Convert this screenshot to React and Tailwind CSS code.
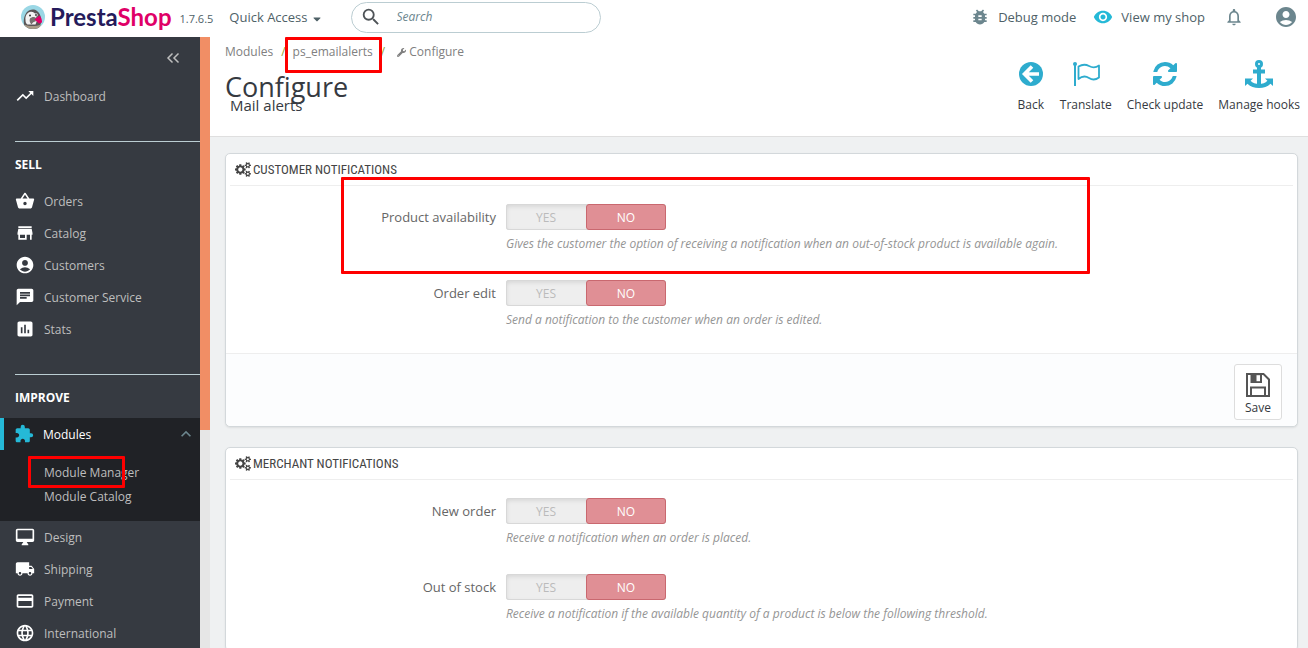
import { useState } from "react";
import {
  MdTrendingUp, MdShoppingBasket, MdStore, MdAccountCircle, MdChat, MdAssessment,
  MdExtension, MdLocalShipping, MdPayment, MdLanguage, MdSearch,
  MdBugReport, MdRemoveRedEye, MdNotificationsNone, MdKeyboardArrowUp,
} from "react-icons/md";
import { FaWrench, FaCaretDown } from "react-icons/fa";

function Logo() {
  return (
    <a href="#home" className="flex items-center gap-[5px]" aria-label="PrestaShop">
      <svg viewBox="0 0 48 48" className="size-6 shrink-0" aria-hidden="true">
        <defs>
          <clipPath id="disc"><circle cx="24" cy="24" r="24" /></clipPath>
        </defs>
        <g clipPath="url(#disc)">
          <rect width="48" height="48" fill="#9ad7e5" />
          <path d="M7 42C4 32 6 22 11 15c5-6 15-8 21-3 7 5 9 14 8 24l-4 12H10Z" fill="#5a5657" />
          <path d="M9 30c-1-8 3-15 9-16 5-1 9 1 11 5l3 12-3 8H13c-3-2-4-5-4-9Z" fill="#f2f2f2" />
          <circle cx="18" cy="21" r="2" fill="#333" />
          <circle cx="30" cy="20" r="3.500" fill="#f2f2f2" />
          <circle cx="30" cy="20" r="1.800" fill="#333" />
          <path d="M18 27c4-4 10-4 13 0l-2 6c-3 0-6 2-8 6-3-3-5-8-3-12Z" fill="#77706f" />
          <path d="m27 29 10-8c4 4 5 9 5 14l-6 2Z" fill="#df0067" />
          <path d="M7 39c9 4 22 4 33 0l-3 10H11Z" fill="#a89a87" />
        </g>
      </svg>
      <span className="font-['Lato',sans-serif] text-[24px] leading-6 font-bold text-[#251b5b]">
        Presta<span className="text-[#df0067]">Shop</span>
      </span>
    </a>
  );
}

function Cogs() {
  return (
    <svg viewBox="0 0 1920 1792" className="h-[15px] w-4 shrink-0 fill-current" aria-hidden="true">
      <path d="M896 896q0-106-75-181t-181-75-181 75-75 181 75 181 181 75 181-75 75-181zm768 512q0-52-38-90t-90-38-90 38-38 90q0 53 37.500 90.500t90.500 37.500 90.500-37.500 37.500-90.500zm0-1024q0-52-38-90t-90-38-90 38-38 90q0 53 37.500 90.500t90.500 37.500 90.500-37.500 37.500-90.500zm-384 421v185q0 10-7 19.500t-16 10.500l-155 24q-11 35-32 76 34 48 90 115 7 11 7 20 0 12-7 19-23 30-82.500 89.500t-78.500 59.500q-11 0-21-7l-115-90q-37 19-77 31-11 108-23 155-7 24-30 24h-186q-11 0-20-7.500t-10-17.500l-23-153q-34-10-75-31l-118 89q-7 7-20 7-11 0-21-8-144-133-144-160 0-9 7-19 10-14 41-53t47-61q-23-44-35-82l-152-24q-10-1-17-9.500t-7-19.500v-185q0-10 7-19.500t16-10.500l155-24q11-35 32-76-34-48-90-115-7-11-7-20 0-12 7-20 22-30 82-89t79-59q11 0 21 7l115 90q34-18 77-32 11-108 23-154 7-24 30-24h186q11 0 20 7.500t10 17.500l23 153q34 10 75 31l118-89q8-7 20-7 11 0 21 8 144 133 144 160 0 8-7 19-12 16-42 54t-45 60q23 48 34 82l152 23q10 2 17 10.500t7 19.500zm640 533v140q0 16-149 31-12 27-30 52 51 113 51 138 0 4-4 7-122 71-124 71-8 0-46-47t-52-68q-20 2-30 2t-30-2q-14 21-52 68t-46 47q-2 0-124-71-4-3-4-7 0-25 51-138-18-25-30-52-149-15-149-31v-140q0-16 149-31 13-29 30-52-51-113-51-138 0-4 4-7 4-2 35-20t59-34 30-16q8 0 46 46.500t52 67.500q20-2 30-2t30 2q51-71 92-112l6-2q4 0 124 70 4 3 4 7 0 25-51 138 17 23 30 52 149 15 149 31zm0-1024v140q0 16-149 31-12 27-30 52 51 113 51 138 0 4-4 7-122 71-124 71-8 0-46-47t-52-68q-20 2-30 2t-30-2q-14 21-52 68t-46 47q-2 0-124-71-4-3-4-7 0-25 51-138-18-25-30-52-149-15-149-31v-140q0-16 149-31 13-29 30-52-51-113-51-138 0-4 4-7 4-2 35-20t59-34 30-16q8 0 46 46.500t52 67.500q20-2 30-2t30 2q51-71 92-112l6-2q4 0 124 70 4 3 4 7 0 25-51 138 17 23 30 52 149 15 149 31z" />
    </svg>
  );
}

function Monitor(props) {
  return (
    <svg viewBox="0 0 24 24" fill="currentColor" {...props}>
      <path d="M21 2H3c-1.100 0-2 .9-2 2v12c0 1.100.9 2 2 2h7l-2 3v1h8v-1l-2-3h7c1.100 0 2-.9 2-2V4c0-1.100-.9-2-2-2zm0 12H3V4h18v10z" />
    </svg>
  );
}

const toolbar = [
  {
    label: "Back",
    icon: (
      <svg viewBox="0 0 28 28" className="size-7" aria-hidden="true">
        <circle cx="14" cy="14" r="12" fill="currentColor" />
        <path d="M15 6.500 7.500 14l7.500 7.500M8.500 14H22" fill="none" stroke="#fff" strokeWidth="3.600" />
      </svg>
    ),
  },
  {
    label: "Translate",
    icon: (
      <svg viewBox="0 0 28 28" className="size-7" aria-hidden="true">
        <circle cx="3" cy="4" r="2" fill="currentColor" />
        <path d="M3 4v22" fill="none" stroke="currentColor" strokeWidth="2" />
        <path d="M6.500 6.500c4-2.400 7-2.400 10.500-.5s6.500 2 10-.5v12c-3.500 2.600-6.500 2.800-10 .5s-6.500-2.400-10.500 1Z" fill="none" stroke="currentColor" strokeWidth="1.800" strokeLinejoin="round" />
      </svg>
    ),
  },
  {
    label: "Check update",
    icon: (
      <svg viewBox="0 0 1536 1536" className="size-6 fill-current" aria-hidden="true">
        <path d="M1511 928q0 5-1 7-64 268-268 434.500T764 1536q-146 0-282.500-55T238 1324l-129 129q-19 19-45 19t-45-19-19-45V960q0-26 19-45t45-19h448q26 0 45 19t19 45-19 45l-137 137q71 66 161 102t187 36q134 0 250-65t186-179q11-17 53-117 8-23 30-23h192q13 0 22.500 9.500t9.500 22.500zm25-800v448q0 26-19 45t-45 19h-448q-26 0-45-19t-19-45 19-45l138-138Q969 256 768 256q-134 0-250 65T332 500q-11 17-53 117-8 23-30 23H50q-13 0-22.500-9.500T18 608v-7q65-268 270-434.500T768 0q146 0 284 55.500T1297 212l130-129q19-19 45-19t45 19 19 45z" />
      </svg>
    ),
  },
  {
    label: "Manage hooks",
    icon: (
      <svg viewBox="0 0 28 28" className="size-7" aria-hidden="true">
        <circle cx="14" cy="4" r="2.500" fill="none" stroke="currentColor" strokeWidth="3" />
        <path d="M14 6v19M8 11.500h12" fill="none" stroke="currentColor" strokeWidth="4" />
        <path d="M0 18.500h8l-2.400 2.300c2 2.300 5 3.200 8.400 3.200s6.400-.9 8.400-3.200L20 18.500h8V26l-2.500-2.300C22.500 26.700 18.700 28 14 28S5.500 26.700 2.500 23.700L0 26Z" fill="currentColor" />
      </svg>
    ),
  },
];

const sell = [
  ["Orders", MdShoppingBasket],
  ["Catalog", MdStore],
  ["Customers", MdAccountCircle],
  ["Customer Service", MdChat],
  ["Stats", MdAssessment],
];
const improve = [
  ["Design", Monitor],
  ["Shipping", MdLocalShipping],
  ["Payment", MdPayment],
  ["International", MdLanguage],
];

function NavItem({ label, Icon }) {
  return (
    <a href="#nav" className="flex h-8 items-center gap-[9px] pl-[15px] text-xs text-[#bebebe]">
      <Icon className="size-5 text-white" aria-hidden="true" />
      <span className="pt-px">{label}</span>
    </a>
  );
}

function NavTitle({ children }) {
  return (
    <h2 className="ml-[15px] border-t border-[#bbcdd2] pt-[13px] text-xs leading-5 font-bold text-white">{children}</h2>
  );
}

function Sidebar() {
  return (
    <div className="flex shrink-0 bg-[#e6e6e6]">
      <nav className="w-[200px] overflow-hidden bg-[#363a41]">
        <div className="flex h-[43px] items-center justify-end pr-5">
          <button type="button" aria-label="Collapse menu" className="text-[#bebebe]">
            <svg viewBox="0 0 14 12" className="mb-[2px] h-3 w-[14px]" fill="none" stroke="currentColor" strokeWidth="1.500" aria-hidden="true">
              <path d="M6.500 1.500 2 6l4.500 4.500M12.500 1.500 8 6l4.500 4.500" />
            </svg>
          </button>
        </div>
        <div className="pb-[29px]">
          <NavItem label="Dashboard" Icon={MdTrendingUp} />
        </div>
        <NavTitle>SELL</NavTitle>
        <div className="pt-[10px] pb-[29px]">
          {sell.map(([label, Icon]) => <NavItem key={label} label={label} Icon={Icon} />)}
        </div>
        <NavTitle>IMPROVE</NavTitle>
        <div className="mt-[10px] h-[103px] bg-[#202226] text-xs">
          <a href="#modules" className="flex h-8 items-center border-l-4 border-[#25b9d7] pr-1 pl-[10px] text-white">
            <MdExtension className="size-5 text-[#25b9d7]" aria-hidden="true" />
            <span className="grow pt-px pl-[9px]">Modules</span>
            <MdKeyboardArrowUp className="size-5 text-[#6c868e]" aria-hidden="true" />
          </a>
          <div className="relative flex flex-col pt-[11px] pl-11 leading-6 text-[#bebebe]">
            <a href="#manager">Module Manager</a>
            <a href="#catalog">Module Catalog</a>
            <div className="absolute top-[6px] left-7 h-8 w-[97px] rounded-[1px] border-3 border-[#fe0000]" />
          </div>
        </div>
        {improve.map(([label, Icon]) => <NavItem key={label} label={label} Icon={Icon} />)}
      </nav>
      <div className="h-[393px] w-[10px] bg-[#f18e65]" />
    </div>
  );
}

function TopBar() {
  return (
    <header className="flex h-[37px] shrink-0 items-center bg-white pb-[3px] pl-[21px] text-[13px] text-[#4e6167]">
      <Logo />
      <span className="pt-1 pl-2 text-[11px]">1.7.6.5</span>
      <button type="button" className="ml-4 flex items-center gap-[3px] pt-px text-[13px]">
        Quick Access <FaCaretDown className="mt-[3px] size-3" aria-hidden="true" />
      </button>
      <label className="ml-7 flex h-[31px] w-[250px] items-center rounded-full border border-[#bbcdd2] pl-2">
        <MdSearch className="size-[22px] text-[#4e5357]" aria-hidden="true" />
        <input aria-label="Search" placeholder="Search" className="ml-[15px] w-40 text-xs italic outline-none placeholder:text-[#6c868e]" />
      </label>
      <div className="ml-auto flex items-center pr-[10px]">
        <MdBugReport className="size-5 text-[#6c868e]" aria-hidden="true" />
        <span className="pt-px pl-2">Debug mode</span>
        <a href="#shop" className="ml-[17px] flex items-center gap-2">
          <MdRemoveRedEye className="size-5 text-[#25b9d7]" aria-hidden="true" />
          <span className="pt-px">View my shop</span>
        </a>
        <button type="button" aria-label="Notifications" className="ml-[19px]">
          <MdNotificationsNone className="size-5 text-[#6c868e]" aria-hidden="true" />
        </button>
        <button type="button" aria-label="Account" className="ml-[30px]">
          <MdAccountCircle className="size-6 text-[#6c868e]" aria-hidden="true" />
        </button>
      </div>
    </header>
  );
}

function PageHead() {
  return (
    <div className="flex h-[100px] justify-between border-b border-[#dfdfdf] bg-white pr-2 pl-[15px]">
      <div>
        <div className="flex h-[29px] items-center text-xs text-[#808080]">
          <a href="#modules">Modules</a>
          <span className="pl-2 text-[#90a030]">/</span>
          <span className="relative ml-[7px]">
            <a href="#module">ps_emailalerts</a>
            <span className="absolute -top-[7px] -left-2 h-9 w-[97px] rounded-[1px] border-3 border-[#fe0000]" />
          </span>
          <span className="pl-2 text-[#90a030]">/</span>
          <FaWrench className="mt-px mr-[3px] ml-3 size-[9px]" aria-hidden="true" />
          Configure
        </div>
        <h1 className="text-[27px] leading-[42px] text-[#363a41]">Configure</h1>
        <h4 className="-mt-[13px] pl-[5px] text-[15px] leading-5 text-[#363a41]">Mail alerts</h4>
      </div>
      <div className="flex gap-[15px] pt-[23px] text-xs text-[#363a41]">
        {toolbar.map(({ label, icon }) => (
          <a key={label} href="#action" className="flex flex-col items-center">
            <span className="flex h-7 items-center text-[#2eacce]">{icon}</span>
            <span className="pt-2 leading-[18px]">{label}</span>
          </a>
        ))}
      </div>
    </div>
  );
}

function YesNo({ id, label, help, marked }) {
  const [on, setOn] = useState(false);
  const half = "flex w-20 cursor-pointer items-center justify-center rounded-[3px] pt-px";
  const off = half + " text-[#bbbbbb]";
  return (
    <div className="relative grid h-[76px] grid-cols-[270px_1fr] gap-[10px] text-[13px]">
      <div id={id} className="pt-[3px] text-right leading-5 text-[#666666]">{label}</div>
      <div>
        <div role="radiogroup" aria-labelledby={id} className="flex h-[26px] w-40 rounded-[3px] bg-[#eeeeee] text-xs shadow-[inset_0_0_0_1px_#d8d8d8,inset_0_2px_5px_rgba(0,0,0,0.12)]">
          <label className={on ? half + " border border-[#5fae68] bg-[#92d097] text-white" : off}>
            <input type="radio" name={id} className="sr-only" checked={on} onChange={() => setOn(true)} />YES
          </label>
          <label className={on ? off : half + " border border-[#c9686f] bg-[#e08f95] text-white"}>
            <input type="radio" name={id} className="sr-only" checked={!on} onChange={() => setOn(false)} />NO
          </label>
        </div>
        <p className="pt-[5px] text-xs leading-[18px] text-[#959595] italic">{help}</p>
      </div>
      {marked && <div className="absolute -top-[27px] left-[115px] h-[97px] w-[749px] rounded-[1px] border-3 border-[#fe0000]" />}
    </div>
  );
}

function Panel({ title, children, footer }) {
  return (
    <section className="rounded-[5px] border border-[#d3d8db] bg-white shadow-[0_1px_2px_rgba(0,0,0,0.08)]">
      <h3 className="mx-1 flex h-8 items-center gap-[2px] border-b border-[#eeeeee] pl-[5px] font-['Ubuntu_Condensed','Roboto_Condensed','Liberation_Sans_Narrow',sans-serif] text-[13px] text-[#444444]">
        <Cogs /> {title}
      </h3>
      <div className="pt-[18px]">{children}</div>
      {footer}
    </section>
  );
}

export default function App() {
  return (
    <div className="flex h-screen flex-col overflow-hidden bg-[#eff1f2] font-['Open_Sans',sans-serif]">
      <TopBar />
      <div className="flex min-h-0 grow">
        <Sidebar />
        <main className="min-w-0 grow overflow-hidden">
          <PageHead />
          <div className="flex flex-col gap-5 pt-4 pr-[10px] pl-[15px]">
            <Panel
              title="CUSTOMER NOTIFICATIONS"
              footer={
                <div className="-mt-[3px] flex justify-end rounded-b-[5px] border-t border-[#eeeeee] bg-[#fcfdfe] pt-[10px] pr-[15px] pb-[6px]">
                  <button type="button" className="flex h-14 w-12 flex-col items-center rounded-[3px] border border-[#dddddd] bg-white pt-2 text-xs leading-[18px] text-[#363a41]">
                    <svg viewBox="0 0 24 24" className="mb-[2px] size-6" aria-hidden="true">
                      <path d="M1 1h16.500L23 6.500V23H1Z" fill="none" stroke="#555" strokeWidth="2" />
                      <path d="M4.500 1h11.500v9H4.500Z" fill="#555" />
                      <path d="M10.500 2.200h3.500v6h-3.500Z" fill="#fff" />
                      <path d="M5 23v-8.500h14V23" fill="none" stroke="#555" strokeWidth="2" />
                    </svg>
                    Save
                  </button>
                </div>
              }
            >
              <YesNo id="availability" marked label="Product availability" help="Gives the customer the option of receiving a notification when an out-of-stock product is available again." />
              <YesNo id="edit" label="Order edit" help="Send a notification to the customer when an order is edited." />
            </Panel>
            <Panel title="MERCHANT NOTIFICATIONS">
              <YesNo id="new" label="New order" help="Receive a notification when an order is placed." />
              <YesNo id="stock" label="Out of stock" help="Receive a notification if the available quantity of a product is below the following threshold." />
            </Panel>
          </div>
        </main>
      </div>
    </div>
  );
}
